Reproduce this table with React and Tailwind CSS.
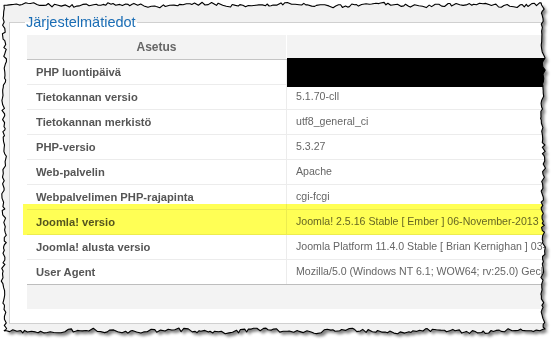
import { useMemo } from 'react';

const rows = [
  { label: 'PHP luontipäivä', value: '' },
  { label: 'Tietokannan versio', value: '5.1.70-cll' },
  { label: 'Tietokannan merkistö', value: 'utf8_general_ci' },
  { label: 'PHP-versio', value: '5.3.27' },
  { label: 'Web-palvelin', value: 'Apache' },
  { label: 'Webpalvelimen PHP-rajapinta', value: 'cgi-fcgi' },
  { label: 'Joomla! versio', value: 'Joomla! 2.5.16 Stable [ Ember ] 06-November-2013 14:00 GMT' },
  { label: 'Joomla! alusta versio', value: 'Joomla Platform 11.4.0 Stable [ Brian Kernighan ] 03-Jan-2012 00:00 GMT' },
  { label: 'User Agent', value: 'Mozilla/5.0 (Windows NT 6.1; WOW64; rv:25.0) Gecko/20100101 Firefox/25.0' },
];

// seeded random so the torn edge is the same on every render
function seeded(seed) {
  return () => {
    seed = (seed + 0x6d2b79f5) | 0;
    let t = Math.imul(seed ^ (seed >>> 15), 1 | seed);
    t = (t + Math.imul(t ^ (t >>> 7), 61 | t)) ^ t;
    return ((t ^ (t >>> 14)) >>> 0) / 4294967296;
  };
}

function tornPath() {
  const r = seeded(11);
  const pts = [];
  const edge = (x0, y0, x1, y1, nx, ny, amp) => {
    const len = Math.hypot(x1 - x0, y1 - y0);
    let d = 0;
    const phase = r() * 6;
    while (d < len) {
      const t = d / len;
      const off = (r() - 0.5) * amp + Math.sin(d / 14 + phase) * amp * 0.35;
      pts.push([x0 + (x1 - x0) * t + nx * off, y0 + (y1 - y0) * t + ny * off]);
      d += 1.5 + r() * 3;
    }
  };
  edge(4, 5, 542, 5, 0, 1, 3.2);
  edge(543, 5, 543, 330, 1, 0, 3.2);
  edge(543, 331, 4, 331, 0, 1, 3.6);
  edge(4, 331, 4, 5, 1, 0, 3.2);
  return 'M' + pts.map((p) => p[0].toFixed(1) + ' ' + p[1].toFixed(1)).join('L') + 'Z';
}

export default function App() {
  const d = useMemo(tornPath, []);

  return (
    <div className="relative w-[552px] h-[344px] bg-white overflow-hidden" style={{ fontFamily: '"Liberation Sans", Arial, sans-serif' }}>
      {/* drop shadow of the torn page */}
      <svg className="absolute inset-0" width="552" height="344">
        <defs>
          <filter id="blur" x="-5%" y="-5%" width="110%" height="110%">
            <feGaussianBlur stdDeviation="1.6" />
          </filter>
        </defs>
        <path d={d} transform="translate(3 3)" fill="#000" opacity="0.5" filter="url(#blur)" />
      </svg>

      <div className="relative w-[552px] h-[344px] bg-[#f2f2f2] pt-[12px] pl-[9px]" style={{ clipPath: `path('${d}')` }}>
        <fieldset className="w-[570px] h-[312px] border border-[#d0d0d0] bg-white pt-[3px]">
          <legend className="ml-[15px] px-px text-[14.5px] leading-[20px] text-[#1a6db5]">Järjestelmätiedot</legend>

          <div className="ml-[17px] w-[540px]">
            <div className="flex h-[25px] border-b border-[#c4c4c4] bg-white">
              <div className="w-[259px] bg-[#f3f3f3] flex items-center justify-center text-[12px] font-bold text-[#666]">Asetus</div>
              <div className="w-px bg-white" />
              <div className="flex-1 bg-[#f3f3f3]" />
            </div>
            {rows.map((row, i) => (
              <div key={row.label} className={`flex h-[25px] border-b ${i === rows.length - 1 ? 'border-[#bdbdbd]' : 'border-[#ececec]'}`}>
                <div className="w-[260px] shrink-0 border-r border-[#ececec] pl-[9px] flex items-center text-[11.2px] font-bold text-[#555] whitespace-nowrap">{row.label}</div>
                <div className="flex-1 pl-[9px] flex items-center text-[10.6px] text-[#666] whitespace-nowrap overflow-hidden">{row.value}</div>
              </div>
            ))}
            <div className="h-[24px] bg-[#f3f3f3]" />
          </div>
        </fieldset>

        {/* redaction and highlighter marks on the screenshot */}
        <div className="absolute left-[287px] top-[58px] w-[265px] h-[29px] bg-black" />
        <div className="absolute left-[23px] top-[204px] w-[529px] h-[31px] bg-[#ffff55] mix-blend-multiply" />
      </div>

      <svg className="absolute inset-0 pointer-events-none" width="552" height="344">
        <path d={d} fill="none" stroke="#000" strokeWidth="1.1" strokeLinejoin="round" />
      </svg>
    </div>
  );
}
